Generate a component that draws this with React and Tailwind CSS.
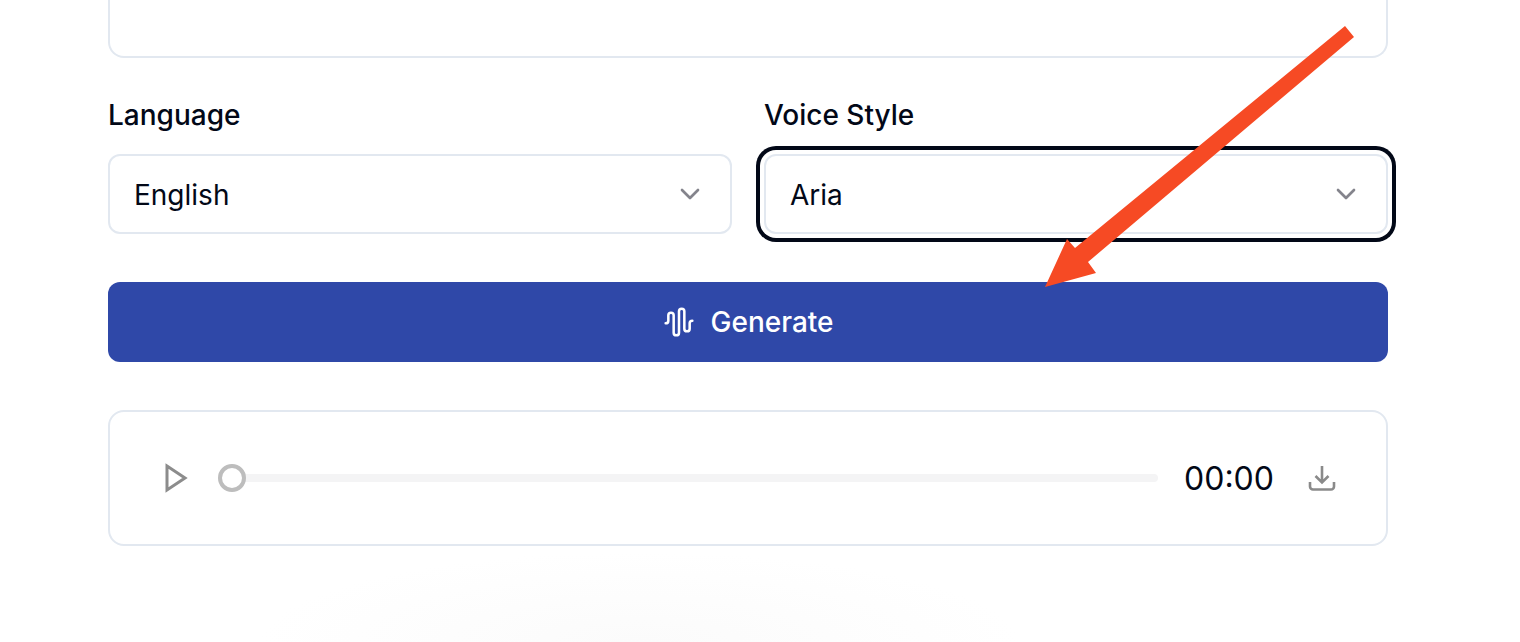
import { AudioWaveform, ChevronDown } from 'lucide-react';

function Field({ label, value, focused }) {
    return (
        <div className="flex flex-col gap-[18px]">
            <label className="text-[28px] font-medium leading-[42px] text-[#020817]">{label}</label>
            <button
                className={`flex h-20 w-full items-center justify-between rounded-xl border-2 border-[#e2e8f0] bg-white pl-6 pr-6 text-[28px] leading-none text-[#020817] ${
                    focused ? 'ring-4 ring-[#020817] ring-offset-4 ring-offset-white' : ''
                }`}
            >
                <span className="pt-0.5">{value}</span>
                <ChevronDown size={32} strokeWidth={2} className="text-[#84848c]" />
            </button>
        </div>
    );
}

export default function App() {
    return (
        <div className="relative flex h-screen flex-col overflow-hidden bg-white font-['Inter',sans-serif]">
            <div className="ml-[108px] flex w-[1280px] flex-col">
                {/* Textarea, scrolled off the top */}
                <div className="h-[58px] rounded-b-2xl border-2 border-t-0 border-[#e2e8f0]" />

                <div className="mt-[36px] grid grid-cols-2 gap-8">
                    <Field label="Language" value="English" />
                    <Field label="Voice Style" value="Aria" focused />
                </div>

                <button className="mt-12 flex h-20 w-full items-center justify-center gap-4 rounded-xl bg-[#2f48a8] text-[28px] font-medium text-white">
                    <AudioWaveform size={32} strokeWidth={1.9} />
                    Generate
                </button>

                {/* Audio player */}
                <div className="mt-12 flex h-[136px] items-center rounded-2xl border-2 border-[#e2e8f0] pl-[54px] pr-[48px]">
                    <svg width="24" height="30" viewBox="0 0 24 30" fill="none" className="shrink-0 text-[#8c8c8c]">
                        <path d="M3 3 L21 15 L3 27 Z" stroke="currentColor" strokeWidth="3" />
                    </svg>
                    <div className="ml-[30px] flex h-7 w-[940px] items-center">
                        <span className="z-10 h-7 w-7 shrink-0 rounded-full border-4 border-[#bdbdbd] bg-white" />
                        <span className="-ml-px h-2 flex-1 rounded-r-full bg-[#f4f4f5]" />
                    </div>
                    <span className="ml-[26px] pt-0.5 text-[32px] leading-none text-[#020817]">00:00</span>
                    <svg width="32" height="32" viewBox="0 0 32 32" fill="none" className="ml-auto shrink-0 text-[#8a8a8a]">
                        <path
                            d="M4 20 v4.5 a3 3 0 0 0 3 3 h18 a3 3 0 0 0 3 -3 V20"
                            stroke="currentColor"
                            strokeWidth="2.6"
                        />
                        <path d="M16 4 V20 M9.5 14 L16 20.5 L22.5 14" stroke="currentColor" strokeWidth="2.6" />
                    </svg>
                </div>
            </div>

            {/* Faint backdrop below the card */}
            <div className="flex-1 bg-[radial-gradient(ellipse_380px_90px_at_640px_100%,#fbfbfb,#ffffff)]" />

            {/* Annotation arrow */}
            <svg width="1520" height="642" viewBox="0 0 1520 642" className="pointer-events-none absolute inset-0">
                <polygon
                    points="1345,26 1354,37 1088,262 1096,273 1045,287 1067,239 1075,248"
                    fill="#f64a24"
                />
            </svg>
        </div>
    );
}
